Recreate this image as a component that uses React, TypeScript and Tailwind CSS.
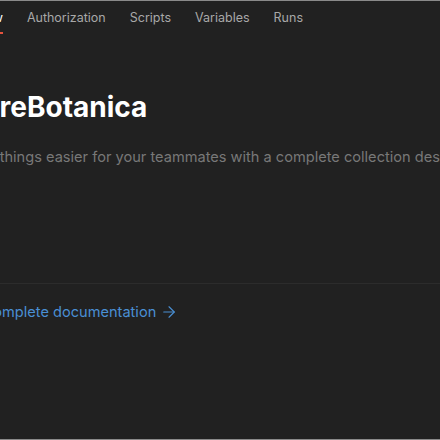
import { ArrowRight } from "lucide-react";

const tabs = ["Authorization", "Scripts", "Variables", "Runs"];

export default function App() {
  return (
    <div
      className="w-[440px] h-[440px] overflow-hidden bg-[#212121] border-t border-b border-[#8a8a8a] flex flex-col"
      style={{ fontFamily: "Inter, 'Noto Sans', sans-serif" }}
    >
      {/* tab bar */}
      <div className="flex items-start gap-6 text-[12.5px] text-[#a8a8a8] h-[33px] shrink-0">
        <div className="relative -ml-[53px] pt-[8px] h-full text-white">
          Overview
          <span className="absolute left-0 right-0 bottom-0 h-[2px] bg-[#e5533d]" />
        </div>
        {tabs.map((t) => (
          <div key={t} className="pt-[8px]">
            {t}
          </div>
        ))}
      </div>

      <div className="flex flex-col">
        <h1 className="mt-[56px] -ml-[36px] whitespace-nowrap text-[28px] font-bold text-white leading-[34px]">
          PureBotanica
        </h1>
        <p className="mt-[23px] -ml-[42px] whitespace-nowrap text-[14.6px] text-[#787878] leading-5">
          Make things easier for your teammates with a complete collection description.
        </p>
        <div className="mt-[116px] border-t border-[#2c2c2c]" />
        <a className="mt-[18px] -ml-[53px] flex items-center gap-[4px] whitespace-nowrap text-[14.6px] text-[#4a8fd4] leading-5">
          View complete documentation
          <ArrowRight size={18} strokeWidth={1.5} />
        </a>
      </div>
    </div>
  );
}
